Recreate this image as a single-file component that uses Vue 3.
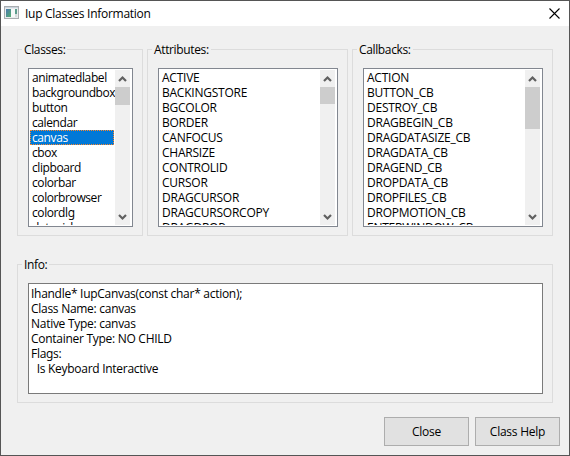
<script setup>
import { ref } from 'vue'

const groups = [
  {
    title: 'Classes:', kind: 'classes', thumb: 18,
    items: ['animatedlabel', 'backgroundbox', 'button', 'calendar', 'canvas', 'cbox', 'clipboard', 'colorbar', 'colorbrowser', 'colordlg', 'datepick'],
  },
  {
    title: 'Attributes:', kind: 'attributes', thumb: 17,
    items: ['ACTIVE', 'BACKINGSTORE', 'BGCOLOR', 'BORDER', 'CANFOCUS', 'CHARSIZE', 'CONTROLID', 'CURSOR', 'DRAGCURSOR', 'DRAGCURSORCOPY', 'DRAGDROP'],
  },
  {
    title: 'Callbacks:', kind: 'callbacks', thumb: 42,
    items: ['ACTION', 'BUTTON_CB', 'DESTROY_CB', 'DRAGBEGIN_CB', 'DRAGDATASIZE_CB', 'DRAGDATA_CB', 'DRAGEND_CB', 'DROPDATA_CB', 'DROPFILES_CB', 'DROPMOTION_CB', 'ENTERWINDOW_CB'],
  },
]
const selected = ref('canvas')
const info = `Ihandle* IupCanvas(const char* action);
Class Name: canvas
Native Type: canvas
Container Type: NO CHILD
Flags:
  Is Keyboard Interactive`
</script>

<template>
  <div class="window">
    <header class="titlebar">
      <svg class="app-icon" width="15" height="13" viewBox="0 0 15 13">
        <defs>
          <linearGradient id="pane" x1="0" y1="0" x2="1" y2="1">
            <stop offset="0" stop-color="#4a78b0" />
            <stop offset="1" stop-color="#55b070" />
          </linearGradient>
        </defs>
        <rect x="0.5" y="0.5" width="14" height="12" fill="#e9eced" stroke="#a9adb0" />
        <rect x="1" y="1" width="13" height="1" fill="#c9d3dc" />
        <rect x="2" y="3" width="5" height="8" fill="url(#pane)" />
        <rect x="7" y="3" width="4" height="8" fill="#f6f9f9" />
        <rect x="11" y="3" width="2" height="5" fill="#5c9c8c" />
        <rect x="11" y="8" width="2" height="3" fill="#d5dbdc" />
      </svg>
      <h1>Iup Classes Information</h1>
      <svg class="close" width="11" height="11" viewBox="0 0 11 11">
        <path d="M.5.5l10 10M10.5.5l-10 10" stroke="#000" stroke-width="1.1" fill="none" />
      </svg>
    </header>

    <main>
      <div class="columns">
        <section v-for="g in groups" :key="g.kind" class="group" :class="g.kind">
          <h2>{{ g.title }}</h2>
          <div class="list">
            <ul>
              <li v-for="item in g.items" :key="item" :class="{ selected: g.kind === 'classes' && item === selected }" @click="g.kind === 'classes' && (selected = item)">{{ item }}</li>
            </ul>
            <div class="scrollbar">
              <svg width="15" height="17" viewBox="0 0 15 17"><path d="M4 11L7.5 7.5L11 11" fill="none" stroke="#606060" stroke-width="2.2" /></svg>
              <div class="thumb" :style="{ height: g.thumb + 'px' }"></div>
              <svg class="down" width="15" height="17" viewBox="0 0 15 17"><path d="M4 7L7.5 10.5L11 7" fill="none" stroke="#606060" stroke-width="2.2" /></svg>
            </div>
          </div>
        </section>
      </div>

      <section class="group info">
        <h2>Info:</h2>
        <pre>{{ info }}</pre>
      </section>

      <footer>
        <button>Close</button>
        <button>Class Help</button>
      </footer>
    </main>
  </div>
</template>

<style>
body { margin: 0; }
</style>

<style scoped>
.window {
  box-sizing: border-box;
  width: 570px;
  height: 456px;
  border: 1px solid #555;
  background: #f0f0f0;
  color: #000;
  font: 12px/15px "Open Sans", "Noto Sans", sans-serif;
  font-feature-settings: "ss02";
  letter-spacing: -0.28px;
  overflow: hidden;
}
.titlebar {
  display: flex;
  align-items: flex-start;
  height: 25px;
  box-sizing: border-box;
  padding: 5px 9px 0 3px;
  background: #fff;
}
h1, h2 { margin: 0; font-size: inherit; font-weight: inherit; line-height: inherit; }
h1 { flex: 1; margin: 0 0 0 6px; }
.close { margin-top: 2px; }
main { padding: 23px 16px 0; }
.columns { display: flex; gap: 4px; }
.group {
  box-sizing: border-box;
  height: 187px;
  border: 1px solid #dcdcdc;
  padding: 0 10px;
}
.classes { width: 126px; }
.attributes, .callbacks { width: 201px; }
h2 {
  width: max-content;
  height: 15px;
  margin: -8px 0 11px -6px;
  padding: 0 2px;
  background: #f0f0f0;
  letter-spacing: -0.36px;
}
.list {
  box-sizing: border-box;
  display: flex;
  height: 159px;
  border: 1px solid #828790;
  padding: 1px;
  background: #fff;
}
.classes .list { width: 105px; letter-spacing: -0.4px; }
.attributes .list, .callbacks .list { width: 180px; letter-spacing: -0.24px; }
ul {
  flex: 1;
  min-width: 0;
  margin: 0;
  padding: 0;
  overflow: hidden;
  list-style: none;
}
li {
  height: 15px;
  margin-right: 1px;
  padding-left: 2px;
  white-space: nowrap;
}
.selected {
  background: #0078d7;
  color: #fff;
  outline: 1px dotted #ff8728;
  outline-offset: -1px;
}
.scrollbar {
  display: flex;
  flex-direction: column;
  width: 15px;
  margin-right: 1px;
  background: #f0f0f0;
}
.thumb { background: #cdcdcd; }
.down { margin-top: auto; }
.info { height: 139px; margin-top: 28px; }
pre {
  box-sizing: border-box;
  width: 515px;
  height: 111px;
  margin: 0;
  border: 1px solid #7a7a7a;
  padding: 2px;
  background: #fff;
  font-family: inherit;
  font-size: inherit;
}
footer {
  display: flex;
  justify-content: flex-end;
  gap: 6px;
  margin: 14px -7px 0 0;
}
button {
  box-sizing: border-box;
  width: 85px;
  height: 29px;
  border: 1px solid #adadad;
  padding: 0;
  background: #e1e1e1;
  color: #000;
  font: inherit;
  letter-spacing: -0.25px;
}
</style>
